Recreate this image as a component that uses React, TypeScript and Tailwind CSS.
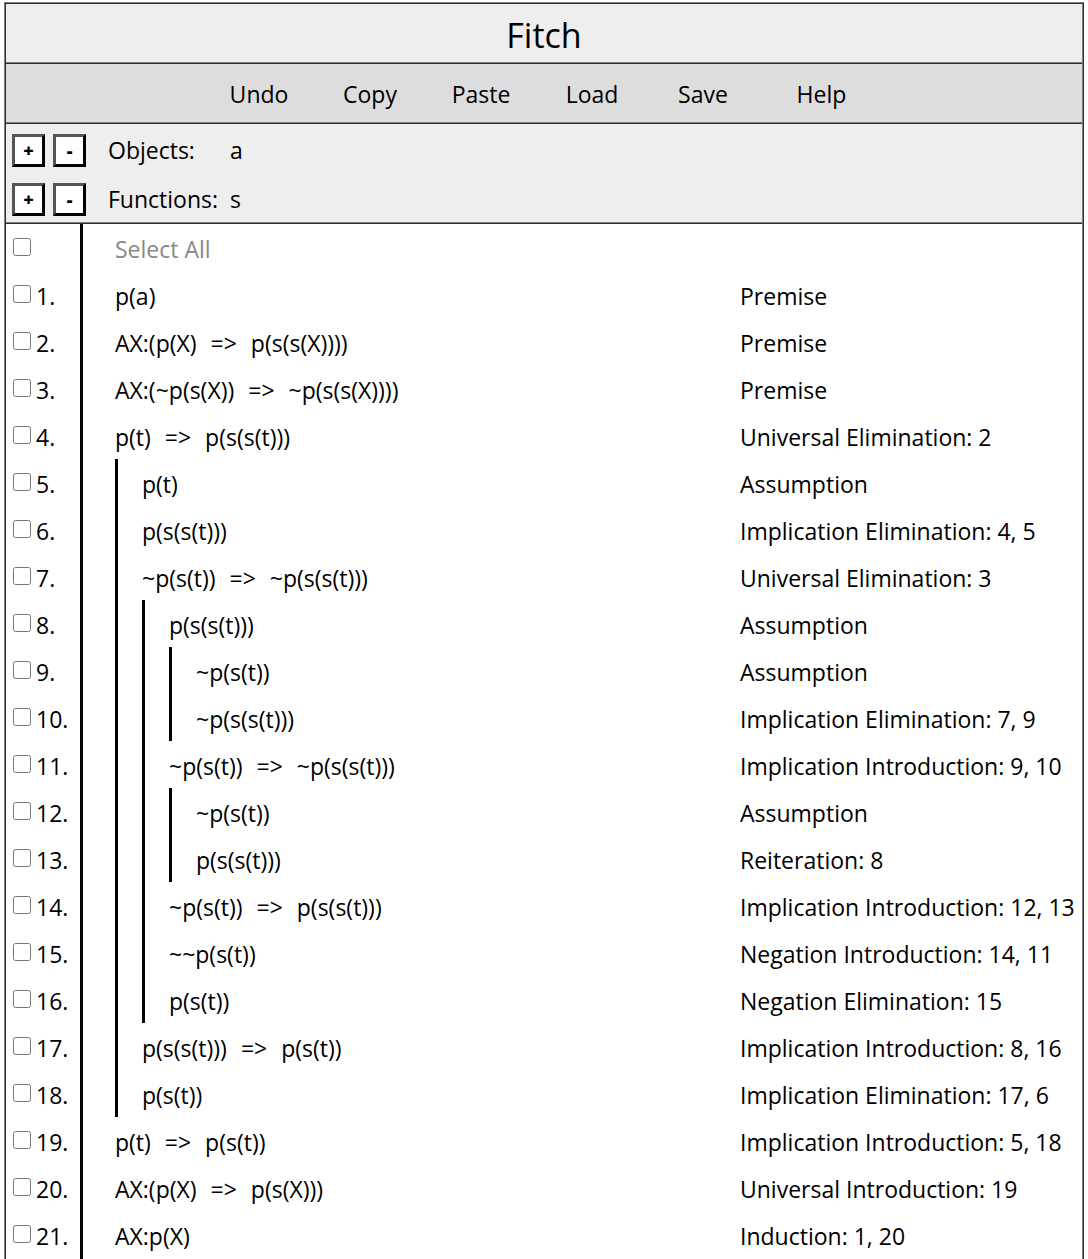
import { Fragment } from 'react';

type Line = { formula: string; level: number; reason: string };

const lines: Line[] = [
  { formula: 'p(a)', level: 0, reason: 'Premise' },
  { formula: 'AX:(p(X) => p(s(s(X))))', level: 0, reason: 'Premise' },
  { formula: 'AX:(~p(s(X)) => ~p(s(s(X))))', level: 0, reason: 'Premise' },
  { formula: 'p(t) => p(s(s(t)))', level: 0, reason: 'Universal Elimination: 2' },
  { formula: 'p(t)', level: 1, reason: 'Assumption' },
  { formula: 'p(s(s(t)))', level: 1, reason: 'Implication Elimination: 4, 5' },
  { formula: '~p(s(t)) => ~p(s(s(t)))', level: 1, reason: 'Universal Elimination: 3' },
  { formula: 'p(s(s(t)))', level: 2, reason: 'Assumption' },
  { formula: '~p(s(t))', level: 3, reason: 'Assumption' },
  { formula: '~p(s(s(t)))', level: 3, reason: 'Implication Elimination: 7, 9' },
  { formula: '~p(s(t)) => ~p(s(s(t)))', level: 2, reason: 'Implication Introduction: 9, 10' },
  { formula: '~p(s(t))', level: 3, reason: 'Assumption' },
  { formula: 'p(s(s(t)))', level: 3, reason: 'Reiteration: 8' },
  { formula: '~p(s(t)) => p(s(s(t)))', level: 2, reason: 'Implication Introduction: 12, 13' },
  { formula: '~~p(s(t))', level: 2, reason: 'Negation Introduction: 14, 11' },
  { formula: 'p(s(t))', level: 2, reason: 'Negation Elimination: 15' },
  { formula: 'p(s(s(t))) => p(s(t))', level: 1, reason: 'Implication Introduction: 8, 16' },
  { formula: 'p(s(t))', level: 1, reason: 'Implication Elimination: 17, 6' },
  { formula: 'p(t) => p(s(t))', level: 0, reason: 'Implication Introduction: 5, 18' },
  { formula: 'AX:(p(X) => p(s(X)))', level: 0, reason: 'Universal Introduction: 19' },
  { formula: 'AX:p(X)', level: 0, reason: 'Induction: 1, 20' },
];

const actions = ['Undo', 'Copy', 'Paste', 'Load', 'Save', 'Help'];

function StepButton({ sign, label }: { sign: string; label: string }) {
  return (
    <button
      type="button"
      aria-label={label}
      className="flex size-[33px] items-center justify-center border-[3px] border-black bg-white pb-0.5 text-lg leading-none font-extrabold [border-style:outset]"
    >
      {sign}
    </button>
  );
}

function Signature({ name, value }: { name: string; value: string }) {
  return (
    <div className="flex h-[49px] items-center pl-1.5">
      <div className="flex w-24 shrink-0 gap-2 pt-1">
        <StepButton sign="+" label={`Add ${name}`} />
        <StepButton sign="-" label={`Remove ${name}`} />
      </div>
      <span className="w-[122px] shrink-0 pt-0.5">{name}:</span>
      <span className="pt-0.5">{value}</span>
    </div>
  );
}

function Gutter({ id, label, number }: { id: string; label: string; number?: number }) {
  return (
    <td className="w-[77px] border-r-[3px] border-black p-0 align-top">
      <div className="flex h-[47px] pl-[7px]">
        <input id={id} type="checkbox" aria-label={label} className="mt-[14px] size-[18px] shrink-0" />
        {number !== undefined && (
          <label htmlFor={id} className="pt-[9px] pl-[5px]">
            {number}.
          </label>
        )}
      </div>
    </td>
  );
}

function Formula({ line }: { line: Line }) {
  return (
    <div className="flex h-[47px] pl-8">
      {Array.from({ length: line.level }, (_, i) => (
        <span key={i} className="w-[27px] shrink-0 border-l-[3px] border-black" />
      ))}
      <span className="pt-[9px]">
        {line.formula.split('=>').map((part, i) => (
          <Fragment key={i}>
            {i > 0 && <span className="mx-2">{'=>'}</span>}
            {part}
          </Fragment>
        ))}
      </span>
    </div>
  );
}

export default function App() {
  return (
    <div className="flex min-h-screen flex-col bg-white px-1 pt-0.5 font-['Open_Sans','Noto_Sans',sans-serif] text-[23px] leading-8 whitespace-nowrap text-black">
      <main className="flex grow flex-col border-x-2 border-t-2 border-b-0 border-[#808080] [border-style:ridge]">
        <h1 className="flex h-[60px] items-center justify-center border-b-2 border-[#808080] bg-[#eeeeee] pt-1 text-[34px] [border-bottom-style:ridge]">
          Fitch
        </h1>
        <nav className="flex h-[60px] items-center justify-center border-b-2 border-[#808080] bg-[#dddddd] pt-0.5 [border-bottom-style:ridge]">
          {actions.map((action) => (
            <button key={action} type="button" className="w-[111px] last:w-[126px]">
              {action}
            </button>
          ))}
        </nav>
        <section className="border-b-2 border-[#808080] bg-[#eeeeee] [border-bottom-style:ridge]">
          <Signature name="Objects" value="a" />
          <Signature name="Functions" value="s" />
        </section>
        <div className="flex grow flex-col">
          <table className="w-full table-fixed border-separate border-spacing-0">
            <colgroup>
              <col className="w-[77px]" />
              <col />
              <col className="w-[342px]" />
            </colgroup>
            <tbody>
              <tr>
                <Gutter id="all" label="Select All" />
                <td className="p-0 align-top">
                  <label htmlFor="all" className="block pt-[9px] pl-8 text-[#888888]">
                    Select All
                  </label>
                </td>
                <td className="p-0" />
              </tr>
              {lines.map((line, i) => (
                <tr key={i}>
                  <Gutter id={`line-${i + 1}`} label={`Line ${i + 1}`} number={i + 1} />
                  <td className="p-0 align-top">
                    <Formula line={line} />
                  </td>
                  <td className="p-0 pt-[9px] align-top">{line.reason}</td>
                </tr>
              ))}
            </tbody>
          </table>
          <div className="w-[77px] grow border-r-[3px] border-black" />
        </div>
      </main>
    </div>
  );
}
